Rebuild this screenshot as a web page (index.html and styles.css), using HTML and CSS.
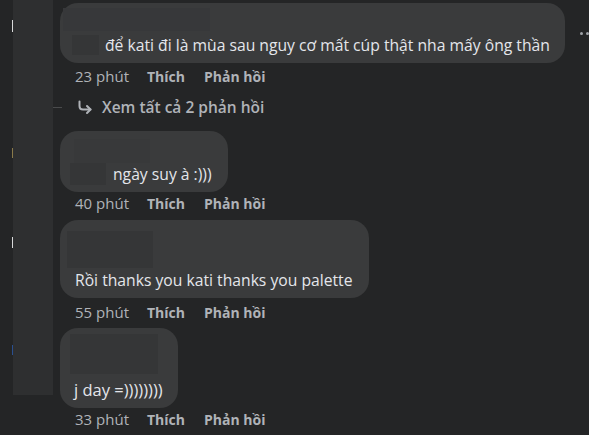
FILE: index.html
```html
<!DOCTYPE html>
<html lang="vi">
<head>
<meta charset="utf-8">
<title>Bình luận</title>
<link rel="stylesheet" href="styles.css">
</head>
<body>
<div class="page">
  <div class="edge">
    <span class="mark mark-white m1"></span>
    <span class="mark mark-gold m2"></span>
    <span class="mark mark-white m3"></span>
    <span class="mark mark-blue m4"></span>
  </div>
  <div class="rail"></div>
  <div class="thread">
    <div class="row c1">
      <div class="bubble b1">
        <div class="redact r-name1"></div>
        <div class="line">
          <div class="redact r-small1"></div>
          <span class="text">để kati đi là mùa sau nguy cơ mất cúp thật nha mấy ông thần</span>
        </div>
      </div>
      <div class="dots"><span></span><span></span><span></span></div>
    </div>
    <div class="meta m-1"><span class="time">23 phút</span><span class="act like">Thích</span><span class="act">Phản hồi</span></div>
    <div class="replies">
      <div class="connector"></div>
      <svg class="reply-icon" width="16" height="16" viewBox="0 0 16 16" aria-hidden="true">
        <path d="M2.5 2.5 V7 Q2.5 10.5 6 10.5 H13.5" fill="none" stroke="#b0b3b8" stroke-width="2" stroke-linecap="round"/>
        <path d="M10 7 L13.5 10.5 L10 14" fill="none" stroke="#b0b3b8" stroke-width="2" stroke-linecap="round" stroke-linejoin="round"/>
      </svg>
      <span class="replies-text">Xem tất cả 2 phản hồi</span>
    </div>

    <div class="bubble b2">
      <div class="redact r-name2"></div>
      <div class="line">
        <div class="redact r-small2"></div>
        <span class="text">ngày suy à :)))</span>
      </div>
    </div>
    <div class="meta m-2"><span class="time">40 phút</span><span class="act like">Thích</span><span class="act">Phản hồi</span></div>

    <div class="bubble b3">
      <div class="redact r-name3"></div>
      <div class="text">Rồi thanks you kati thanks you palette</div>
    </div>
    <div class="meta m-3"><span class="time">55 phút</span><span class="act like">Thích</span><span class="act">Phản hồi</span></div>

    <div class="bubble b4">
      <div class="redact r-name4"></div>
      <div class="text">j day =))))))))</div>
    </div>
    <div class="meta m-4"><span class="time">33 phút</span><span class="act like">Thích</span><span class="act">Phản hồi</span></div>
  </div>
</div>
</body>
</html>
```

FILE: styles.css
```css
html, body {
  margin: 0;
  padding: 0;
  background: #242526;
}
body {
  width: 589px;
  height: 435px;
  overflow: hidden;
  font-family: "Open Sans", "Noto Sans", sans-serif;
  color: #e4e6eb;
}
.page {
  display: flex;
  align-items: flex-start;
  height: 435px;
}
.edge {
  flex: none;
  width: 1px;
  margin-left: 12px;
  display: flex;
  flex-direction: column;
}
.mark {
  display: block;
  width: 1px;
}
.mark-white { background: #d8d9da; }
.mark-gold { background: #8a7a4a; }
.mark-blue { background: #2a4f8f; }
.m1 { margin-top: 20px; height: 12px; }
.m2 { margin-top: 116px; height: 10px; }
.m3 { margin-top: 79px; height: 11px; }
.m4 { margin-top: 97px; height: 10px; }

.rail {
  flex: none;
  width: 40px;
  height: 395px;
  background: #2e2f30;
}
.thread {
  flex: none;
  margin-left: 7px;
  display: flex;
  flex-direction: column;
  align-items: flex-start;
}
.row {
  display: flex;
  align-items: center;
}
.bubble {
  flex: none;
  background: #3a3b3c;
  border-radius: 18px;
  box-sizing: border-box;
}
.redact {
  flex: none;
  background: #353637;
}
.line {
  display: flex;
  align-items: center;
}
.text {
  font-size: 15.7px;
  line-height: 20px;
  color: #e4e6eb;
  white-space: nowrap;
}

/* comment 1 */
.c1 { margin-top: 3px; }
.b1 {
  height: 60px;
  padding: 5px 15px 0 3px;
}
.r-name1 { width: 147px; height: 23px; background: #37383a; }
.b1 .line { margin-top: 4px; }
.r-small1 { width: 27px; height: 20px; margin-left: 9px; margin-right: 6px; }
.dots {
  flex: none;
  display: flex;
  gap: 3px;
  margin-left: 15px;
}
.dots span {
  width: 3px;
  height: 3px;
  border-radius: 50%;
  background: #a0a3a8;
}

/* meta */
.meta {
  display: flex;
  align-items: center;
  height: 16px;
  padding-left: 15px;
  font-size: 14px;
  color: #b0b3b8;
  white-space: nowrap;
}
.time { width: 72px; font-size: 15px; }
.act { font-weight: 700; }
.like { width: 57px; }
.m-1 { margin-top: 5px; }
.m-2 { margin-top: 3px; }
.m-3 { margin-top: 6px; }
.m-4 { margin-top: 3px; }

/* replies link */
.replies {
  display: flex;
  align-items: center;
  height: 18px;
  margin-top: 14px;
}
.connector {
  width: 9px;
  height: 1px;
  margin-left: -7px;
  background: #4a4b4c;
}
.reply-icon { margin-left: 15px; }
.replies-text {
  margin-left: 9px;
  font-size: 15.5px;
  font-weight: 600;
  color: #b0b3b8;
  white-space: nowrap;
}

/* comment 2 */
.b2 {
  margin-top: 15px;
  height: 61px;
  padding: 8px 16px 0 10px;
}
.r-name2 { width: 76px; height: 24px; margin-left: 4px; background: #38393a; }
.r-small2 { width: 36px; height: 22px; margin-right: 7px; }

/* comment 3 */
.b3 {
  margin-top: 9px;
  height: 78px;
  padding: 11px 16px 0 7px;
}
.r-name3 { width: 86px; height: 37px; }
.b3 .text { margin-top: 2px; margin-left: 8px; }

/* comment 4 */
.b4 {
  margin-top: 8px;
  height: 80px;
  padding: 6px 15px 0 10px;
}
.r-name4 { width: 88px; height: 40px; }
.b4 .text { margin-top: 6px; margin-left: 4px; font-size: 16.5px; }
```
